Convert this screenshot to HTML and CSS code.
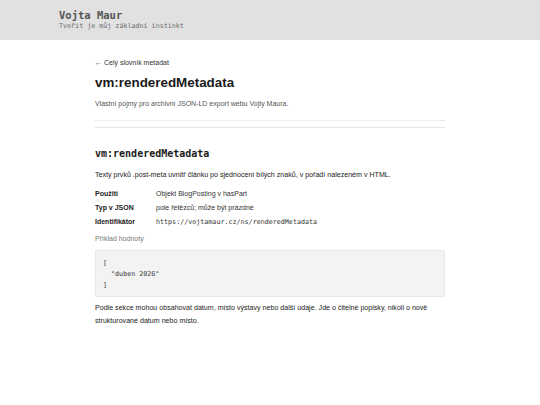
FILE: index.html
```html
<!DOCTYPE html>
<html lang="cs">
<head>
<meta charset="utf-8">
<title>vm:renderedMetadata</title>
<link rel="stylesheet" href="styles.css">
</head>
<body>
<header class="site-header">
  <div class="site-title">Vojta Maur</div>
  <div class="site-tagline">Tvořit je můj základní instinkt</div>
</header>
<main class="content">
  <div class="page-head">
    <a class="back" href="#">← Celý slovník metadat</a>
    <h1 class="title">vm:renderedMetadata</h1>
    <p class="lead">Vlastní pojmy pro archivní JSON-LD export webu Vojty Maura.</p>
  </div>
  <hr class="rule">
  <section class="term">
    <h2 class="term-name">vm:renderedMetadata</h2>
    <p class="text first">Texty prvků .post-meta uvnitř článku po sjednocení bílých znaků, v pořadí nalezeném v HTML.</p>
    <dl class="props">
      <dt>Použití</dt><dd>Objekt BlogPosting v hasPart</dd>
      <dt>Typ v JSON</dt><dd>pole řetězců; může být prázdné</dd>
      <dt>Identifikátor</dt><dd><code>https://vojtamaur.cz/ns/renderedMetadata</code></dd>
    </dl>
    <p class="example-label">Příklad hodnoty</p>
    <pre class="example">[
  "duben 2026"
]</pre>
    <p class="text note">Podle sekce mohou obsahovat datum, místo výstavy nebo další údaje. Jde o čitelné popisky, nikoli o nově strukturované datum nebo místo.</p>
  </section>
</main>
</body>
</html>
```

FILE: styles.css
```css
html, body {
  margin: 0;
  padding: 0;
  background: #ffffff;
}
body {
  font-family: "Liberation Sans", Arial, sans-serif;
  color: #222;
  font-size: 7px;
}
.site-header {
  background: #e1e1e1;
  height: 40px;
  box-sizing: border-box;
  padding: 9px 0 0 59px;
  display: flex;
  flex-direction: column;
}
.site-title {
  font-family: "DejaVu Sans Mono", monospace;
  font-weight: bold;
  font-size: 10.5px;
  line-height: 13px;
  color: #555;
}
.site-tagline {
  font-family: "DejaVu Sans Mono", monospace;
  font-size: 6.7px;
  line-height: 9px;
  color: #6a6a6a;
}
.content {
  width: 350px;
  margin: 0 auto;
  padding-top: 18px;
  display: flex;
  flex-direction: column;
}
.page-head {
  border-bottom: 1px solid #ececec;
  padding-bottom: 11px;
}
.back {
  display: block;
  color: #333;
  text-decoration: none;
  font-size: 7px;
  line-height: 9px;
}
.title {
  font-size: 13.4px;
  line-height: 16px;
  margin: 8px 0 0;
  color: #1a1a1a;
  font-weight: bold;
}
.lead {
  margin: 8px 0 0;
  font-size: 7px;
  line-height: 10px;
  color: #555;
}
.rule {
  border: 0;
  border-top: 1px solid #e6e6e6;
  margin: 6px 0 0;
  height: 0;
}
.term {
  padding-top: 19px;
}
.term-name {
  font-family: "DejaVu Sans Mono", monospace;
  font-size: 10px;
  line-height: 14px;
  margin: 0;
  font-weight: bold;
  color: #1a1a1a;
}
.text {
  margin: 0;
  font-size: 7.1px;
  line-height: 13px;
  color: #222;
}
.text.first {
  margin-top: 8px;
}
.props {
  margin: 7px 0 0;
  display: grid;
  grid-template-columns: 61px 1fr;
  grid-auto-rows: 10px;
  row-gap: 4px;
  font-size: 7px;
  line-height: 10px;
}
.props dt {
  font-weight: bold;
  color: #222;
}
.props dd {
  margin: 0;
  color: #333;
}
.props code {
  font-family: "DejaVu Sans Mono", monospace;
  font-size: 6.7px;
  line-height: 10px;
}
.example-label {
  margin: 7px 0 0;
  color: #777;
  font-size: 7px;
  line-height: 10px;
}
.example {
  margin: 6px 0 0;
  background: #f3f3f3;
  border: 1px solid #e9e9e9;
  padding: 7px 7px 5px;
  font-family: "DejaVu Sans Mono", monospace;
  font-size: 6.7px;
  line-height: 11px;
  color: #333;
}
.note {
  margin-top: 5px;
}
```
